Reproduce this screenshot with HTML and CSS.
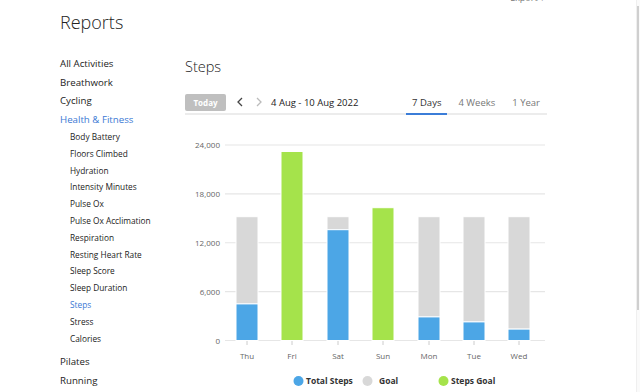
FILE: index.html
```html
<!DOCTYPE html>
<html lang="en">
<head>
  <meta charset="UTF-8" />
  <title>Reports</title>
  <link rel="stylesheet" href="styles.css">
</head>
<body>

  <div class="topbar">
    <span class="export">Export ▾</span>
  </div>

  <h1 class="page-title">Reports</h1>

  <div class="layout">

    <div class="sidebar">
      <a class="nav-item">All Activities</a>
      <a class="nav-item">Breathwork</a>
      <a class="nav-item">Cycling</a>
      <a class="nav-item active">Health &amp; Fitness</a>
      <div class="sub-nav">
        <a class="sub-item">Body Battery</a>
        <a class="sub-item">Floors Climbed</a>
        <a class="sub-item">Hydration</a>
        <a class="sub-item">Intensity Minutes</a>
        <a class="sub-item">Pulse Ox</a>
        <a class="sub-item">Pulse Ox Acclimation</a>
        <a class="sub-item">Respiration</a>
        <a class="sub-item">Resting Heart Rate</a>
        <a class="sub-item">Sleep Score</a>
        <a class="sub-item">Sleep Duration</a>
        <a class="sub-item active">Steps</a>
        <a class="sub-item">Stress</a>
        <a class="sub-item">Calories</a>
      </div>
      <a class="nav-item">Pilates</a>
      <a class="nav-item">Running</a>
    </div>

    <div class="main">
      <h2 class="section-title">Steps</h2>

      <div class="toolbar">
        <button class="today-btn">Today</button>
        <span class="arrow">
          <svg width="8" height="10" viewBox="0 0 8 10"><polyline points="6,1 2,5 6,9" fill="none" stroke="#444" stroke-width="1.3"/></svg>
        </span>
        <span class="arrow">
          <svg width="8" height="10" viewBox="0 0 8 10"><polyline points="2,1 6,5 2,9" fill="none" stroke="#bbb" stroke-width="1.3"/></svg>
        </span>
        <span class="date-range">4 Aug - 10 Aug 2022</span>
        <div class="tabs">
          <span class="tab selected">7 Days</span>
          <span class="tab">4 Weeks</span>
          <span class="tab">1 Year</span>
        </div>
      </div>

      <svg class="chart" width="380" height="277" viewBox="0 0 380 277">
        <g stroke="#e6e6e6" stroke-width="1.2">
          <line x1="55" y1="30" x2="375" y2="30"/>
          <line x1="55" y1="78.9" x2="375" y2="78.9"/>
          <line x1="55" y1="127.75" x2="375" y2="127.75"/>
          <line x1="55" y1="176.6" x2="375" y2="176.6"/>
          <line x1="55" y1="225.5" x2="375" y2="225.5"/>
        </g>
        <g class="axis-label" text-anchor="end">
          <text x="50" y="33">24,000</text>
          <text x="50" y="81.9">18,000</text>
          <text x="50" y="130.75">12,000</text>
          <text x="50" y="179.6">6,000</text>
          <text x="50" y="228.5">0</text>
        </g>

        <g stroke="#fff" stroke-width="1">
          <!-- Thu -->
          <rect x="66" y="101.7" width="22" height="87.2" fill="#d8d8d8"/>
          <rect x="66" y="188.9" width="22" height="36.6" fill="#4ca6e6"/>
          <!-- Fri -->
          <rect x="111" y="36.5" width="22" height="189" fill="#a5e34b"/>
          <!-- Sat -->
          <rect x="157" y="101.7" width="22" height="13" fill="#d8d8d8"/>
          <rect x="157" y="114.7" width="22" height="110.8" fill="#4ca6e6"/>
          <!-- Sun -->
          <rect x="202" y="92.7" width="22" height="132.8" fill="#a5e34b"/>
          <!-- Mon -->
          <rect x="248" y="101.7" width="22" height="100.2" fill="#d8d8d8"/>
          <rect x="248" y="201.9" width="22" height="23.6" fill="#4ca6e6"/>
          <!-- Tue -->
          <rect x="293" y="101.7" width="22" height="105.2" fill="#d8d8d8"/>
          <rect x="293" y="206.9" width="22" height="18.6" fill="#4ca6e6"/>
          <!-- Wed -->
          <rect x="338" y="101.7" width="22" height="112.4" fill="#d8d8d8"/>
          <rect x="338" y="214.1" width="22" height="11.4" fill="#4ca6e6"/>
        </g>

        <g stroke="#ccc" stroke-width="1">
          <line x1="77" y1="226" x2="77" y2="230"/>
          <line x1="122" y1="226" x2="122" y2="230"/>
          <line x1="168" y1="226" x2="168" y2="230"/>
          <line x1="213" y1="226" x2="213" y2="230"/>
          <line x1="259" y1="226" x2="259" y2="230"/>
          <line x1="304" y1="226" x2="304" y2="230"/>
          <line x1="349" y1="226" x2="349" y2="230"/>
        </g>
        <g class="axis-label" text-anchor="middle">
          <text x="77" y="244">Thu</text>
          <text x="122" y="244">Fri</text>
          <text x="168" y="244">Sat</text>
          <text x="213" y="244">Sun</text>
          <text x="259" y="244">Mon</text>
          <text x="304" y="244">Tue</text>
          <text x="349" y="244">Wed</text>
        </g>

        <g class="legend">
          <circle cx="128.5" cy="266" r="5" fill="#4ca6e6"/>
          <text x="136" y="269">Total Steps</text>
          <circle cx="197.5" cy="266" r="5" fill="#d8d8d8"/>
          <text x="209" y="269">Goal</text>
          <circle cx="273.5" cy="266" r="5" fill="#a5e34b"/>
          <text x="281" y="269">Steps Goal</text>
        </g>
      </svg>
    </div>

  </div>

  <div class="scrollbar"><div class="thumb"></div></div>

</body>
</html>
```

FILE: styles.css
```css
* {
  margin: 0;
  padding: 0;
  box-sizing: border-box;
}

body {
  font-family: 'Open Sans', sans-serif;
  background: white;
  color: #222;
  overflow: hidden;
  height: 392px;
}

.topbar {
  height: 6px;
  display: flex;
  justify-content: flex-end;
  padding-right: 95px;
  overflow: hidden;
}

.export {
  font-size: 9px;
  line-height: 10px;
  margin-top: -7px;
  color: #777;
}

.page-title {
  font-size: 18px;
  font-weight: 300;
  line-height: 24px;
  margin-top: 4px;
  padding-left: 60px;
  color: #222;
}

.layout {
  display: flex;
  align-items: flex-start;
  margin-top: 21px;
}

.sidebar {
  width: 185px;
  padding-left: 60px;
  display: flex;
  flex-direction: column;
}

.nav-item {
  font-size: 9.7px;
  line-height: 18.5px;
  color: #222;
  font-weight: 500;
}

.nav-item.active, .sub-item.active {
  color: #3a78d4;
}

.sub-nav {
  display: flex;
  flex-direction: column;
  padding-left: 10px;
  margin-bottom: 6px;
}

.sub-item {
  font-size: 8.3px;
  line-height: 16.8px;
  font-weight: 500;
  color: #222;
}

.main {
  width: 362px;
}

.section-title {
  font-size: 14.5px;
  font-weight: 300;
  line-height: 20px;
  margin-top: 2px;
  color: #222;
}

.toolbar {
  display: flex;
  align-items: center;
  height: 24px;
  margin-top: 14px;
  border-bottom: 2px solid #ececec;
  padding-right: 1px;
}

.today-btn {
  width: 41px;
  height: 17px;
  border: none;
  border-radius: 2px;
  background: #bfbfbf;
  color: white;
  font-family: 'Open Sans', sans-serif;
  font-size: 8px;
  font-weight: 700;
}

.arrow {
  display: flex;
  margin-left: 10px;
}

.arrow + .arrow {
  margin-left: 11px;
}

.date-range {
  font-size: 9.5px;
  margin-left: 8px;
  color: #222;
}

.tabs {
  margin-left: auto;
  display: flex;
  gap: 5px;
  align-self: stretch;
}

.tab {
  font-size: 9.5px;
  padding: 0 6px;
  color: #777;
  display: flex;
  align-items: center;
  margin-bottom: -2px;
  border-bottom: 2px solid transparent;
}

.tab.selected {
  color: #333;
  border-bottom-color: #3b7dd8;
}

.chart {
  display: block;
  margin-left: -15px;
}

.axis-label {
  font-family: 'Open Sans', sans-serif;
  font-size: 8px;
  fill: #666;
}

.legend text {
  font-family: 'Open Sans', sans-serif;
  font-size: 8.5px;
  font-weight: 700;
  fill: #333;
}

.scrollbar {
  position: fixed;
  top: 0;
  right: 0;
  width: 4px;
  height: 392px;
  border-left: 1px solid #efefef;
  background: #fafafa;
}

.thumb {
  margin-top: 6px;
  height: 304px;
  width: 2px;
  background: #cfcfcf;
}
```
